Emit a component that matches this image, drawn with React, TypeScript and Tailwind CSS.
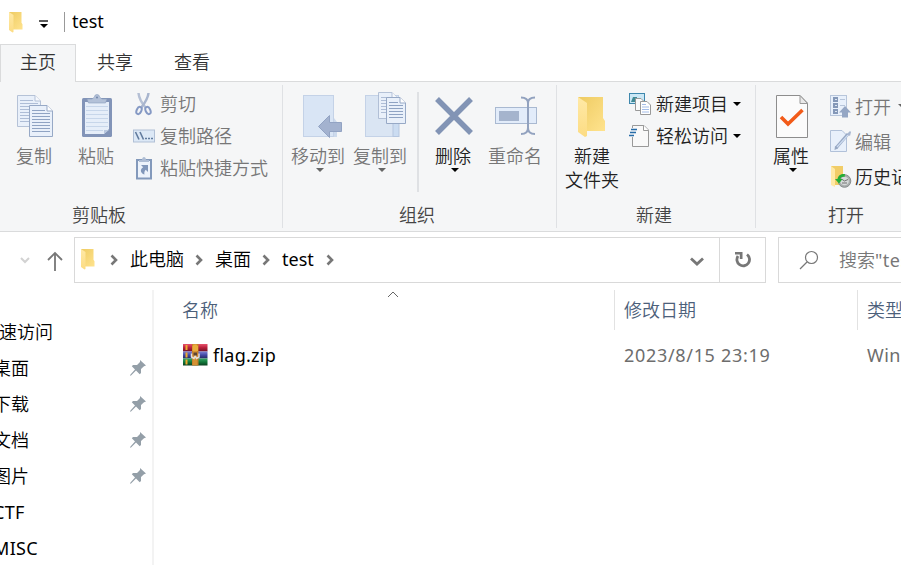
import React from 'react';

type Kids = { children?: React.ReactNode };

const Svg = ({ w, h, children }: Kids & { w: number; h: number }) => (
  <svg width={w} height={h} viewBox={`0 0 ${w} ${h}`} fill="none" className="block shrink-0">
    {children}
  </svg>
);

const Folder = ({ w, h }: { w: number; h: number }) => (
  <svg width={w} height={h} viewBox="0 0 28 41" preserveAspectRatio="none" className="block shrink-0">
    <defs>
      <linearGradient id="fback" x1="0" y1="0" x2="1" y2="1">
        <stop offset="0" stopColor="#eecb62" />
        <stop offset="1" stopColor="#ffe38e" />
      </linearGradient>
      <linearGradient id="ffront" x1="0" y1="0" x2="0" y2="1">
        <stop offset="0" stopColor="#ffe9a6" />
        <stop offset="1" stopColor="#fcdc83" />
      </linearGradient>
    </defs>
    <path d="M0 0H25V21L27 24V34H8Z" fill="url(#fback)" />
    <path d="M0 0L9 6V39L7 40L0 35Z" fill="url(#ffront)" />
  </svg>
);

const Caret = ({ color = '#000' }: { color?: string }) => (
  <Svg w={8} h={4}>
    <path d="M0 0H8L4 4Z" fill={color} />
  </Svg>
);

const Sheet = ({ x, y, w, h, op = 1 }: { x: number; y: number; w: number; h: number; op?: number }) => (
  <g transform={`translate(${x} ${y})`}>
    <path d={`M.5 .5H${w - 6}L${w - 0.5} 6V${h - 0.5}H.5Z`} fill="#e9f0fa" />
    <g opacity={op}>
      <path d={`M.5 .5H${w - 6}L${w - 0.5} 6V${h - 0.5}H.5Z`} stroke="#97a9c6" />
      <path d={`M${w - 6} .5V6H${w - 0.5}`} fill="#fff" stroke="#97a9c6" />
      {[5, 8, 11, 14, 17, 20, 23, 26].map((l) =>
        l < h - 5 ? (
          <path key={l} d={`M3 ${l + 0.5}H${l < 7 ? w - 8 : w - 3}`} stroke="#8fa3c3" />
        ) : null,
      )}
    </g>
  </g>
);

const CopyIcon = () => (
  <Svg w={36} h={44}>
    <Sheet x={0} y={1} w={24} h={32} op={0.65} />
    <Sheet x={12} y={11} w={24} h={32} />
  </Svg>
);

const PasteIcon = () => (
  <Svg w={30} h={44}>
    <rect x="0" y="4" width="30" height="39" rx="1.5" fill="#8294b8" />
    <path d="M3 8H27V35L22 40H3Z" fill="#e6eef9" />
    <path d="M22 40V36H27Z" fill="#b9c8df" />
    {[12, 16, 20, 24, 28, 32, 36].map((y) => (
      <path key={y} d={`M4 ${y}.5H${y > 35 ? 21 : 26}`} stroke="#c7d6ea" />
    ))}
    <path d="M5 5H10L12.500 3A2.500 2.500 0 0 1 17.500 3L20 5H25L23.500 9H6.500Z" fill="#b3c1d8" stroke="#8c9dbd" strokeWidth=".6" />
    <circle cx="15" cy="3.500" r="1" fill="#7185a9" />
  </Svg>
);

const ScissorsIcon = () => (
  <Svg w={22} h={24}>
    <path d="M5.500 1C6 7 9.500 12 13 16" stroke="#b5c0d5" strokeWidth="2.500" />
    <path d="M15.500 1C15 7 11 12 8 16" stroke="#a8b5ce" strokeWidth="2.500" />
    <ellipse cx="6" cy="18.500" rx="2.300" ry="3.800" transform="rotate(25 6 18.500)" stroke="#8599c4" strokeWidth="2" />
    <ellipse cx="15" cy="18.500" rx="2.300" ry="3.800" transform="rotate(-25 15 18.500)" stroke="#8599c4" strokeWidth="2" />
  </Svg>
);

const PathIcon = () => (
  <Svg w={22} h={14}>
    <rect x=".5" y="1" width="21" height="12" fill="#dce8f6" stroke="#b1c0d6" />
    <path d="M2.500 3L6 10.500M7 3L10.500 10.500" stroke="#617b9e" strokeWidth="1.600" />
    <path d="M12 9.500H14M15 9.500H17M18 9.500H20" stroke="#617b9e" strokeWidth="1.600" />
  </Svg>
);

const PasteShortcutIcon = () => (
  <Svg w={22} h={24}>
    <rect x="4" y="4" width="14" height="18.500" fill="#edf3fb" stroke="#8399bb" strokeWidth="2" />
    <path d="M6 4H9C9 0 13 0 13 4H16V6H6Z" fill="#aebdd4" />
    <path d="M8 9H15V16L12.700 13.700C11.500 15 11 16.500 11.500 18.500C7 17 6.800 13 10.200 11.200Z" fill="#8197ba" />
  </Svg>
);

const MoveIcon = () => (
  <Svg w={40} h={44}>
    <rect x=".5" y="1.500" width="30" height="41" fill="#d9e5f5" stroke="#c4d2e7" />
    <path d="M31 24L34 28V43H31Z" fill="#cddaec" />
    <path d="M15.500 32.500L26.500 21.500V28.500H38.500V37.500H26.500V43.500Z" fill="#a3b2cf" stroke="#92a3c3" />
  </Svg>
);

const CopyToIcon = () => (
  <Svg w={41} h={48}>
    <rect x=".5" y="3.500" width="33" height="41" fill="#dae5f3" stroke="#c4d2e7" />
    <rect x="28" y="30" width="6" height="14.500" fill="#cbdcf1" stroke="#b5c6df" />
    <Sheet x={13} y={0} w={20} h={27} op={0.65} />
    <Sheet x={21} y={5} w={20} h={27} />
  </Svg>
);

const DeleteIcon = () => (
  <Svg w={38} h={38}>
    <path d="M2 2L36 36M36 2L2 36" stroke="#8294b5" strokeWidth="5.500" />
  </Svg>
);

const RenameIcon = () => (
  <Svg w={43} h={40}>
    <rect x=".5" y="11.500" width="41" height="16" fill="#e2ecfa" stroke="#a9b9d1" />
    <rect x="4" y="15" width="20" height="10" fill="#a5b4cd" />
    <path d="M26 1.500C30 1.500 33 3 33 7V32C33 36 30 38 26 38M40 1.500C36 1.500 33 3 33 7M33 32C33 36 36 38 40 38" stroke="#92a2bf" strokeWidth="2" />
  </Svg>
);

const NewItemIcon = () => (
  <Svg w={22} h={23}>
    <rect x=".5" y=".5" width="15" height="10" fill="#cbe7f5" stroke="#3d87ad" />
    <path d="M2 9L4 4H8V9Z" fill="#408a95" />
    <path d="M6.500 5.500H12L15.500 9V17.500H6.500Z" fill="#fbfbfb" stroke="#999" />
    <path d="M11.500 8.500H18L21.500 12V21.500H11.500Z" fill="#fff" stroke="#999" />
    <path d="M13 11.500H17M13 14H20M13 16.500H20M13 19H20" stroke="#a4bde9" />
  </Svg>
);

const EasyAccessIcon = () => (
  <Svg w={22} h={23}>
    <path d="M3.500 .5H15L19.500 5V21.500H3.500Z" fill="#f9f9f9" stroke="#999" />
    <path d="M14.500 .5V5.500H19.500" fill="#fff" stroke="#999" />
    <path d="M1.500 4.500H8M.5 7.500H7M0 10.500H5" stroke="#f4f6f9" strokeWidth="3" />
    <path d="M2 4.500H8M1 7.500H7M0 10.500H5" stroke="#286da8" strokeWidth="1.400" />
  </Svg>
);

const PropsIcon = () => (
  <Svg w={32} h={43}>
    <path d="M.5 .5H24L31.500 8V42.500H.5Z" fill="#fbfbfb" stroke="#8d8d8d" />
    <path d="M24 .5V8.500H31.500Z" fill="#e9e9e9" stroke="#999" />
    <path d="M5 22L12 29L26.500 15" stroke="#f25b19" strokeWidth="3.600" />
  </Svg>
);

const OpenIcon = () => (
  <Svg w={22} h={23}>
    <rect x=".5" y=".5" width="16" height="20" fill="#e8f0fb" stroke="#b7c5da" />
    <path d="M3 2H8V7H3ZM3 8H8V13H3ZM3 14H8V19H3Z" fill="#8498b8" />
    <path d="M5 4H7V5H5ZM5 10H7V11H5ZM5 16H7V17H5Z" fill="#dce5f1" />
    <path d="M10 4.500H15M10 10.500H15" stroke="#b7c5da" />
    <path d="M15 11L21 17.500H18V22.500H12V17.500H9Z" fill="#94a6c4" />
  </Svg>
);

const EditIcon = () => (
  <Svg w={22} h={23}>
    <path d="M.5 .5H12L16.500 5V21.500H.5Z" fill="#e8f0fb" stroke="#b1c1d9" />
    <path d="M6 18L18 4" stroke="#97a8c4" strokeWidth="3" />
    <path d="M7 17L18 5" stroke="#cddcf1" strokeWidth="1.200" />
    <path d="M17 4L20 1L21 2L20 6Z" fill="#a8b7d1" />
    <path d="M4.500 20L5 16L8 18.500Z" fill="#97a8c4" />
  </Svg>
);

const HistoryIcon = () => (
  <Svg w={22} h={23}>
    <path d="M1 1H13V20H3Z" fill="#f1cd68" />
    <path d="M1 1L5 4V22L1 20Z" fill="#ffe9a6" />
    <circle cx="14.500" cy="16" r="6.300" fill="#a9adad" stroke="#8a9090" />
    <circle cx="14.500" cy="16" r="4.300" fill="#d6dada" />
    <path d="M11.500 14L14.500 16L18 14.500M12 18H17" stroke="#666" strokeWidth=".9" />
    <path d="M15 9C11 8.500 8 10.500 7.500 14H5L9 18.500L12.500 14H10.500C11 12.500 12 11.500 14.500 12Z" fill="#24ad37" />
  </Svg>
);

const Chevron = ({ className = '' }: { className?: string }) => (
  <span className={`block shrink-0 ${className}`}>
    <Svg w={9} h={12}>
      <path d="M1.500 1.500L6 6L1.500 10.500" stroke="#777" strokeWidth="2.600" />
    </Svg>
  </span>
);

const Pin = () => (
  <Svg w={16} h={16}>
    <path d="M10 0L16 5.500L14 6.200L11 9V13L9.700 14.200L6 10.500L1 15.500L0 15.700L.3 14.800L5 9.500L1.800 6.300L3 5H7L10 2Z" fill="#949fa8" />
  </Svg>
);

const ZipIcon = () => (
  <Svg w={25} h={22}>
    <defs>
      <linearGradient id="zr" x1="0" y1="0" x2="0" y2="1"><stop stopColor="#e8526c" /><stop offset=".5" stopColor="#b71f3b" /><stop offset="1" stopColor="#6d1224" /></linearGradient>
      <linearGradient id="zb" x1="0" y1="0" x2="0" y2="1"><stop stopColor="#7c82d6" /><stop offset=".5" stopColor="#444aa5" /><stop offset="1" stopColor="#25295f" /></linearGradient>
      <linearGradient id="zg" x1="0" y1="0" x2="0" y2="1"><stop stopColor="#36a665" /><stop offset=".5" stopColor="#12793b" /><stop offset="1" stopColor="#0b3f20" /></linearGradient>
    </defs>
    <rect x="0" y="0" width="24.500" height="7.500" fill="url(#zr)" />
    <rect x="0" y="7.500" width="24.500" height="7" fill="url(#zb)" />
    <rect x="0" y="14.500" width="24.500" height="7" fill="url(#zg)" />
    <path d="M3.500 1V6M3.500 8.500V13.500M3.500 15.500V20.500" stroke="#efa92e" strokeWidth="2" />
    <rect x="9" y="0" width="6.500" height="21.500" fill="#c7812b" />
    <path d="M11 0V21M13 0V21" stroke="#e3a13d" />
    <path d="M9.500 2Q12.200 -1 15 2V7H9.500Z" fill="#e9ad3c" />
    <path d="M8.500 9.500V13L11 14.500L12.200 12L13.500 14.500L16 13V9.500" stroke="#e6e0da" strokeWidth="1.500" />
    <path d="M10.500 8.500H14V11.500H10.500Z" fill="#5d4433" />
  </Svg>
);

const BigButton = ({ icon, lines, className, caret, caretColor }: {
  icon: React.ReactNode; lines: string[]; className: string; caret?: boolean; caretColor?: string;
}) => (
  <div className={`flex shrink-0 flex-col items-center ${className}`}>
    <div className="flex h-[62px] items-center justify-center pt-[6px] pl-[2px]">{icon}</div>
    {lines.map((l) => (
      <span key={l} className="h-6 leading-6">{l}</span>
    ))}
    {caret && <span className="ml-[4px]"><Caret color={caretColor} /></span>}
  </div>
);

const SmallButton = ({ icon, text, className = '', caret }: {
  icon: React.ReactNode; text: string; className?: string; caret?: string;
}) => (
  <div className={`flex items-center ${className}`}>
    <span className="flex w-[22px] shrink-0 justify-center">{icon}</span>
    <span className="ml-[5px] leading-6">{text}</span>
    {caret && <span className="ml-[5px] -mt-px"><Caret color={caret} /></span>}
  </div>
);

const Group = ({ label, labelClass, className, children }: Kids & { label: string; labelClass: string; className: string }) => (
  <section className={`flex shrink-0 flex-col ${className}`}>
    <div className="flex h-[121px]">{children}</div>
    <div className={`leading-6 text-[#444] ${labelClass}`}>{label}</div>
  </section>
);

const Separator = () => <div className="mt-[3px] h-[143px] w-px shrink-0 bg-[#dfe1e4]" />;

const places = [
  { name: '桌面', pin: true },
  { name: '下载', pin: true },
  { name: '文档', pin: true },
  { name: '图片', pin: true },
  { name: 'CTF', pin: false },
  { name: 'MISC', pin: false },
];

export default function App() {
  return (
    <div className="flex h-[565px] w-[901px] flex-col overflow-hidden whitespace-nowrap bg-white font-['Noto_Sans','Noto_Sans_CJK_SC',sans-serif] text-[18px] font-[350] text-black">
      <header className="flex h-11 shrink-0 items-center pl-[9px]">
        <Folder w={14} h={21} />
        <span className="ml-4 mt-[4px]">
          <Svg w={10} h={9}>
            <path d="M0 1H9" stroke="#000" strokeWidth="1.300" />
            <path d="M1 4H9L5 8Z" fill="#000" />
          </Svg>
        </span>
        <span className="ml-[15px] h-5 w-px bg-[#999]" />
        <span className="-mt-[2px] ml-[7px] font-normal leading-6">test</span>
      </header>

      <nav className="flex h-[38px] shrink-0 text-[#333]">
        <div className="flex w-[76px] items-center justify-center border border-b-0 border-[#dadbdc] bg-[#f5f6f7] pb-[2px]">主页</div>
        <div className="flex grow items-center border-b border-[#dadbdc] pl-[21px]">
          <span>共享</span>
          <span className="ml-[41px]">查看</span>
        </div>
      </nav>

      <div className="flex h-[150px] shrink-0 border-b border-[#dadbdc] bg-[#f5f6f7] text-[#777]">
        <Group label="剪贴板" labelClass="pl-[72px]" className="w-[282px]">
          <BigButton icon={<CopyIcon />} lines={['复制']} className="w-[68px]" />
          <BigButton icon={<PasteIcon />} lines={['粘贴']} className="w-[56px]" />
          <div className="ml-[9px] flex flex-col pt-[6px]">
            <SmallButton icon={<ScissorsIcon />} text="剪切" className="h-8" />
            <SmallButton icon={<PathIcon />} text="复制路径" className="h-8" />
            <SmallButton icon={<PasteShortcutIcon />} text="粘贴快捷方式" className="h-8" />
          </div>
        </Group>
        <Separator />
        <Group label="组织" labelClass="pl-[116px]" className="w-[273px]">
          <BigButton icon={<MoveIcon />} lines={['移动到']} className="ml-1 w-[62px] [&>div]:pl-[10px]" caret caretColor="#666" />
          <BigButton icon={<CopyToIcon />} lines={['复制到']} className="w-[62px] [&>div]:pl-[10px]" caret caretColor="#666" />
          <div className="ml-[6px] mt-[10px] h-[100px] w-[2px] bg-[#dfe1e4]" />
          <BigButton icon={<DeleteIcon />} lines={['删除']} className="ml-[3px] w-[62px] text-[#222]" caret />
          <BigButton icon={<RenameIcon />} lines={['重命名']} className="w-[62px] [&>div]:pl-[3px]" />
        </Group>
        <Separator />
        <Group label="新建" labelClass="pl-[79px]" className="w-[198px] text-[#222]">
          <BigButton icon={<Folder w={28} h={41} />} lines={['新建', '文件夹']} className="ml-[6px] w-[58px] [&>div]:pl-0 [&>div]:pt-[8px]" />
          <div className="ml-[8px] flex flex-col pt-[6px]">
            <SmallButton icon={<NewItemIcon />} text="新建项目" className="h-8" caret="#000" />
            <SmallButton icon={<EasyAccessIcon />} text="轻松访问" className="h-8" caret="#000" />
          </div>
        </Group>
        <Separator />
        <Group label="打开" labelClass="pl-[72px]" className="w-[198px]">
          <BigButton icon={<PropsIcon />} lines={['属性']} className="ml-[9px] w-[52px] text-[#222]" caret />
          <div className="ml-[13px] flex flex-col pt-[7px] [&>div>span+span]:ml-[3px] [&>div>span+span+span]:ml-[7px]">
            <SmallButton icon={<OpenIcon />} text="打开" className="h-[35px]" caret="#666" />
            <SmallButton icon={<EditIcon />} text="编辑" className="h-[35px]" />
            <SmallButton icon={<HistoryIcon />} text="历史记录" className="h-[35px] text-[#222]" />
          </div>
        </Group>
      </div>

      <div className="flex h-[58px] shrink-0 pt-[5px]">
        <div className="flex h-[46px] w-[74px] shrink-0 items-center pl-[20px]">
          <Svg w={10} h={7}>
            <path d="M1 1L5 5L9 1" stroke="#d2d2d2" strokeWidth="2" />
          </Svg>
          <span className="ml-[17px] mt-[2px]">
            <Svg w={16} h={20}>
              <path d="M8 20V2M1 9L8 2L15 9" stroke="#777" strokeWidth="1.800" />
            </Svg>
          </span>
        </div>
        <div className="flex h-[46px] w-[692px] shrink-0 items-center border border-[#d9d9d9] pl-[6px]">
          <span className="-mt-[2px]"><Folder w={14} h={21} /></span>
          <Chevron className="ml-[15px]" />
          <span className="-mt-px ml-[11px]">此电脑</span>
          <Chevron className="ml-[11px]" />
          <span className="-mt-px ml-[11px]">桌面</span>
          <Chevron className="ml-[11px]" />
          <span className="-mt-[2px] ml-[11px] w-8 font-normal">test</span>
          <Chevron className="ml-[12px]" />
          <span className="ml-auto mr-[15px] mt-[2px]">
            <Svg w={14} h={9}>
              <path d="M1 1.500L7 7L13 1.500" stroke="#777" strokeWidth="2.800" />
            </Svg>
          </span>
          <div className="flex h-full w-[46px] items-center justify-center border-l border-[#d9d9d9]">
            <Svg w={18} h={18}>
              <path d="M13 3.500A6.300 6.300 0 1 1 4 5" stroke="#777" strokeWidth="2.800" />
              <path d="M1 1H8.500V8H5.800V3.600H1Z" fill="#777" />
            </Svg>
          </div>
        </div>
        <div className="ml-3 flex h-[46px] w-[200px] shrink-0 items-center border border-[#d9d9d9] pl-[20px] text-[#777]">
          <Svg w={20} h={20}>
            <circle cx="12.500" cy="7.500" r="6" stroke="#777" strokeWidth="1.200" />
            <path d="M8 12L1 19" stroke="#777" strokeWidth="1.200" />
          </Svg>
          <span className="ml-5">搜索<span className="font-normal tracking-[0.5px]">"test"</span></span>
        </div>
      </div>

      <div className="flex min-h-0 grow">
        <aside className="w-[154px] shrink-0 overflow-hidden border-r-2 border-[#f3f3f3] pt-[24px]">
          <div className="-ml-[19px] h-9 leading-9">快速访问</div>
          {places.map((p) => (
            <div key={p.name} className="-ml-[7px] flex h-9 items-center justify-between pr-[6px]">
              <span className={p.pin ? '' : 'font-normal tracking-[0.3px]'}>{p.name}</span>
              {p.pin && <Pin />}
            </div>
          ))}
        </aside>
        <main className="flex grow flex-col">
          <div className="flex h-10 shrink-0 text-[#4c607a]">
            <div className="flex w-[461px] shrink-0 items-center border-r border-[#e2e2e2] pl-7">
              <span className="w-[205px]">名称</span>
              <span className="-mt-[31px]">
                <Svg w={12} h={7}>
                  <path d="M1 6L6 1L11 6" stroke="#666" />
                </Svg>
              </span>
            </div>
            <div className="flex w-[243px] shrink-0 items-center border-r border-[#e2e2e2] pl-[9px]">修改日期</div>
            <div className="flex items-center pl-[9px]">类型</div>
          </div>
          <div className="mt-[7px] flex h-9 shrink-0 items-center font-normal text-[#6d6d6d]">
            <div className="flex w-[470px] shrink-0 items-center pl-[29px] text-black">
              <ZipIcon />
              <span className="ml-[5px] tracking-[0.25px]">flag.zip</span>
            </div>
            <span className="w-[243px] shrink-0 tracking-[0.68px]">2023/8/15 23:19</span>
            <span className="tracking-[0.4px]">WinRAR ZIP</span>
          </div>
        </main>
      </div>
    </div>
  );
}
